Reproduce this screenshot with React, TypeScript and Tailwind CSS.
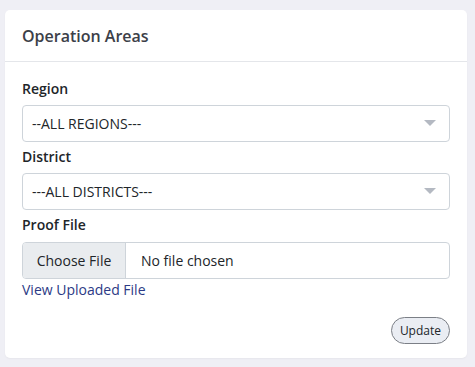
import React from 'react';

const Caret = () => (
    <svg width="12" height="7" viewBox="0 0 12 7" className="shrink-0">
        <path d="M0 0 L12 0 L6 6 Z" fill="#b4b9c2" />
    </svg>
);

const SelectBox = ({ value }: { value: string }) => (
    <div className="flex h-[37px] items-center justify-between rounded-[4px] border border-[#ced4da] bg-white pl-[9px] pr-[13px]">
        <span className="text-[14px] text-[#212529]">{value}</span>
        <Caret />
    </div>
);

export default function App() {
    return (
        <div className="min-h-screen bg-[#efeff5] pl-[5px] pr-[8px] pt-[10px] font-['Open_Sans',sans-serif]">
            <div className="h-[348px] rounded-[5px] bg-white shadow-[0_1px_2px_rgba(0,0,0,0.04)]">
                <div className="flex h-[52px] items-center border-b border-[#e4e6ea] px-[17px]">
                    <h2 className="text-[16px] font-semibold text-[#3c4048]">Operation Areas</h2>
                </div>
                <div className="flex flex-col px-[17px] pt-[17px]">
                    <label className="mb-[6px] text-[14px] font-semibold leading-[20px] text-[#212529]">Region</label>
                    <SelectBox value="--ALL REGIONS---" />
                    <label className="mb-[6px] mt-[5px] text-[14px] font-semibold leading-[20px] text-[#212529]">District</label>
                    <SelectBox value="---ALL DISTRICTS---" />
                    <label className="mb-[7px] mt-[5px] text-[14px] font-semibold leading-[20px] text-[#212529]">Proof File</label>
                    <div className="flex h-[37px] items-stretch overflow-hidden rounded-[4px] border border-[#ced4da] text-[14px] text-[#212529]">
                        <span className="flex w-[103px] items-center justify-center border-r border-[#ced4da] bg-[#e9ecef]">Choose File</span>
                        <span className="flex items-center pl-[15px]">No file chosen</span>
                    </div>
                    <a className="mt-[1px] text-[14px] leading-[20px] text-[#2c3a85]">View Uploaded File</a>
                    <div className="mt-[17px] flex justify-end">
                        <button className="h-[27px] rounded-full border border-[#7b7f86] bg-[#eaedf3] px-[8px] text-[12px] text-[#212529]">Update</button>
                    </div>
                </div>
            </div>
        </div>
    );
}
